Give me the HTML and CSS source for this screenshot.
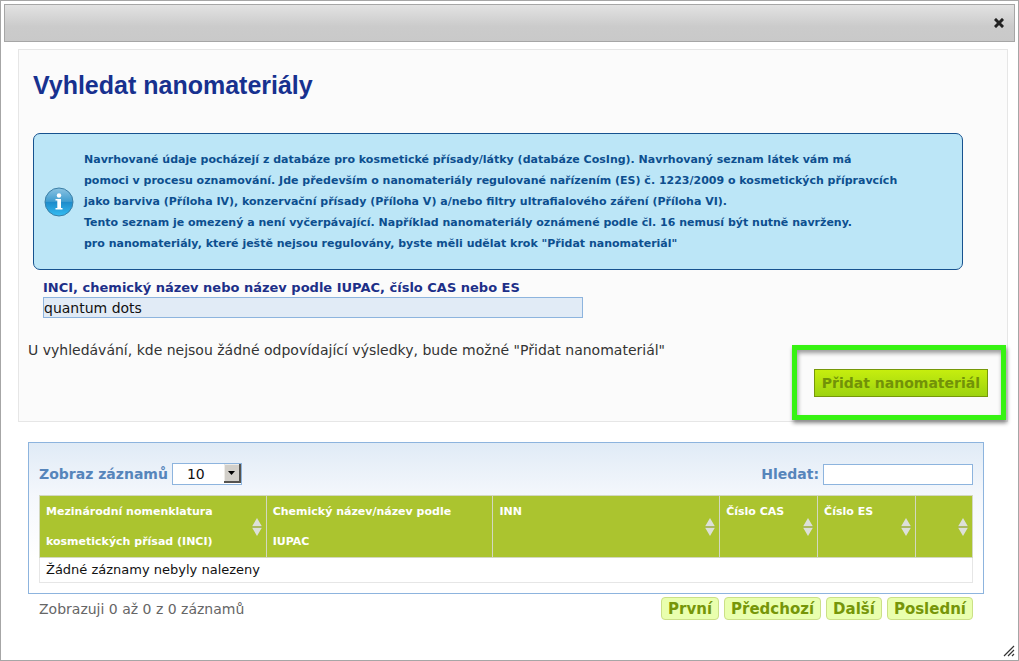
FILE: index.html
```html
<!DOCTYPE html>
<html lang="cs">
<head>
<meta charset="utf-8">
<meta name="viewport" content="width=device-width, initial-scale=1">
<title>Vyhledat nanomateriály</title>
<link rel="stylesheet" href="styles.css">
</head>
<body>
<svg width="0" height="0" class="sprite" aria-hidden="true">
  <symbol id="sort" viewBox="0 0 10 18">
    <path d="M5 0 L10 8.500 H0 Z M0 9.500 H10 L5 18 Z" fill="#dde0d8"/>
    <path d="M0 9 H10" stroke="#93a343" stroke-width="1"/>
  </symbol>
</svg>
<div class="dialog" role="dialog" aria-labelledby="dialog-title">
  <header class="titlebar">
    <button class="close" type="button" aria-label="Zavřít">
      <svg width="10" height="10" viewBox="0 0 10 10"><path d="M2 2 L8 8 M8 2 L2 8" stroke="#222" stroke-width="3" stroke-linecap="square"/></svg>
    </button>
  </header>

  <main class="content">
    <section class="panel">
      <h1 class="heading" id="dialog-title">Vyhledat nanomateriály</h1>
      <div class="info">
        <svg class="info-icon" width="30" height="30" viewBox="0 0 30 30" aria-hidden="true">
          <defs>
            <linearGradient id="ball" x1="0" y1="0" x2="0" y2="1">
              <stop offset="0" stop-color="#8cc3e2"/><stop offset=".48" stop-color="#3f9dd0"/>
              <stop offset=".5" stop-color="#1d8aca"/><stop offset="1" stop-color="#35bdf2"/>
            </linearGradient>
          </defs>
          <circle cx="15" cy="15" r="14" fill="url(#ball)" stroke="#3b7fa6"/>
          <circle cx="15" cy="8.500" r="2.200" fill="#fff"/>
          <path d="M11.500 12 H17 V21 H18.500 V22.500 H11.500 V21 H13.300 V13.500 H11.500 Z" fill="#fff"/>
        </svg>
        <p class="info-text">Navrhované údaje pocházejí z databáze pro kosmetické přísady/látky (databáze CosIng). Navrhovaný seznam látek vám má<br>pomoci v procesu oznamování. Jde především o nanomateriály regulované nařízením (ES) č. 1223/2009 o kosmetických přípravcích<br>jako barviva (Příloha IV), konzervační přísady (Příloha V) a/nebo filtry ultrafialového záření (Příloha VI).<br>Tento seznam je omezený a není vyčerpávající. Například nanomateriály oznámené podle čl. 16 nemusí být nutně navrženy.<br>pro nanomateriály, které ještě nejsou regulovány, byste měli udělat krok "Přidat nanomateriál"</p>
      </div>
      <div class="field">
        <label class="field-label" for="query">INCI, chemický název nebo název podle IUPAC, číslo CAS nebo ES</label>
        <input class="field-input" id="query" type="text" value="quantum dots">
      </div>
      <p class="hint">U vyhledávání, kde nejsou žádné odpovídající výsledky, bude možné "Přidat nanomateriál"</p>
      <div class="actions">
        <div class="action">
          <button class="add" type="button">Přidat nanomateriál</button>
          <span class="highlight"></span>
        </div>
      </div>
    </section>

    <section class="results">
      <div class="toolbar">
        <div class="tool">
          <label for="count">Zobraz záznamů</label>
          <span class="picker">
            <select class="count" id="count"><option>10</option><option>25</option><option>50</option></select>
            <svg class="arrow" width="17" height="19" viewBox="0 0 17 19" aria-hidden="true">
              <path d="M0 0 H17 V19 H0 Z" fill="#d2cfc9"/>
              <path d="M.5 18 V.5 H16" fill="none" stroke="#eeece8"/>
              <path d="M16 0 V18 H0" fill="none" stroke="#55534f" stroke-width="2"/>
              <path d="M4 7 H11 L7.500 11 Z" fill="#000"/>
            </svg>
          </span>
        </div>
        <div class="tool">
          <label for="filter">Hledat:</label>
          <input class="filter" id="filter" type="text">
        </div>
      </div>
      <table class="grid">
        <colgroup><col class="c-name"><col class="c-name"><col class="c-name"><col class="c-num"><col class="c-num"><col class="c-last"></colgroup>
        <thead>
          <tr>
            <th scope="col"><div class="head"><span>Mezinárodní nomenklatura kosmetických přísad (INCI)</span><svg class="sort" width="10" height="18"><use href="#sort"/></svg></div></th>
            <th scope="col"><div class="head"><span>Chemický název/název podle IUPAC</span></div></th>
            <th scope="col"><div class="head"><span>INN</span><svg class="sort" width="10" height="18"><use href="#sort"/></svg></div></th>
            <th scope="col"><div class="head"><span>Číslo CAS</span><svg class="sort" width="10" height="18"><use href="#sort"/></svg></div></th>
            <th scope="col"><div class="head"><span>Číslo ES</span><svg class="sort" width="10" height="18"><use href="#sort"/></svg></div></th>
            <th scope="col"><div class="head"><span></span><svg class="sort" width="10" height="18"><use href="#sort"/></svg></div></th>
          </tr>
        </thead>
        <tbody><tr><td colspan="6">Žádné záznamy nebyly nalezeny</td></tr></tbody>
      </table>
    </section>

    <footer class="footer">
      <span class="status">Zobrazuji 0 až 0 z 0 záznamů</span>
      <nav class="pager">
        <button class="page" type="button">První</button>
        <button class="page" type="button">Předchozí</button>
        <button class="page" type="button">Další</button>
        <button class="page" type="button">Poslední</button>
      </nav>
    </footer>
  </main>
  <svg class="grip" width="12" height="12" viewBox="0 0 12 12" aria-hidden="true"><path d="M1 11 L11 1 M5 11 L11 5 M9 11 L11 9" stroke="#333" stroke-width="1.200"/></svg>
</div>
</body>
</html>
```
FILE: styles.css
```css
* { box-sizing: border-box; }

body {
  margin: 0;
  background: #fff;
  color: #333;
  font: 14px/20px "DejaVu Sans", Verdana, sans-serif;
}

h1, p { margin: 0; }

button, input, select { font: inherit; margin: 0; }

.sprite { position: absolute; }

.dialog {
  position: relative;
  min-height: 100vh;
  padding: 3px;
  border: 1px solid #a6a6a6;
}

.titlebar {
  display: flex;
  align-items: center;
  justify-content: flex-end;
  height: 38px;
  padding: 0 10px;
  border: 1px solid #a6a6a6;
  background: linear-gradient(#e2e2e2, #cbcbcb 60%, #c9c9c9);
}

.close {
  display: flex;
  padding: 0;
  border: 0;
  background: none;
}

.content { padding: 7px 7px 0 14px; }

.panel {
  padding: 20px 19px 24px 9px;
  border: 1px solid #e6e6e6;
  background: #fbfbfb;
}

.heading {
  padding-left: 5px;
  color: #17318f;
  font: bold 25px/30px "Liberation Sans", Arial, sans-serif;
}

.info {
  display: flex;
  align-items: center;
  gap: 10px;
  margin: 33px 25px 0 5px;
  padding: 15px 10px;
  border: 1px solid #17528f;
  border-radius: 7px;
  background: #bce6f7;
}

.info-icon { flex: none; }

.info-text {
  color: #0d4f8f;
  font-size: 11px;
  font-weight: bold;
  line-height: 21px;
  white-space: nowrap;
}

.field {
  display: flex;
  flex-direction: column;
  margin: 8px 0 0 15px;
}

.field-label {
  color: #1d2f88;
  font-size: 13px;
  font-weight: bold;
  line-height: 19px;
}

.field-input {
  width: 540px;
  max-width: 100%;
  height: 21px;
  padding: 1px 0;
  border: 1px solid #8db4de;
  background: #e1ebf6;
  color: #111;
}

.hint { margin-top: 22px; }

.actions {
  display: flex;
  justify-content: flex-end;
  margin-top: 9px;
}

.action { position: relative; }

.add {
  display: block;
  height: 28px;
  padding: 0 7px;
  border: 1px solid #76980a;
  background: linear-gradient(#c6ee0e, #9dd310);
  color: #729208;
  font-weight: bold;
}

.highlight {
  position: absolute;
  inset: -24px -18px -23px -22px;
  border: 5px solid #37f312;
  box-shadow: 1px 3px 4px #888, inset 1px 3px 4px #999;
  pointer-events: none;
}

.results {
  margin: 20px 24px 0 10px;
  padding: 20px 10px 10px;
  border: 1px solid #8db4de;
  background: linear-gradient(#e0ebf6, #f4f7fc 52px, #fff 115px);
}

.toolbar {
  display: flex;
  justify-content: space-between;
  margin-bottom: 10px;
  color: #5685bb;
  font-weight: bold;
}

.tool {
  display: flex;
  align-items: center;
  gap: 4px;
}

.picker { position: relative; display: flex; }

.count {
  appearance: none;
  width: 70px;
  height: 22px;
  padding: 0 0 0 14px;
  border: 1px solid #8db4de;
  border-radius: 0;
  background: #fff;
  color: #111;
  font-weight: normal;
}

.arrow {
  position: absolute;
  top: 1px;
  right: 1px;
  pointer-events: none;
}

.filter {
  width: 150px;
  height: 21px;
  padding: 1px 2px;
  border: 1px solid #8db4de;
  background: #fff;
}

.grid {
  width: 100%;
  border-collapse: collapse;
  table-layout: fixed;
}

.c-name { width: 24.3%; }
.c-num { width: 10.5%; }
.c-last { width: 6.1%; }

.grid th {
  padding: 1px 4px 0 6px;
  border: 1px solid #d3d8c0;
  background: #abc42f;
  color: #fff;
  font-size: 11px;
  line-height: 30px;
  text-align: left;
  vertical-align: top;
}

.head {
  display: flex;
  justify-content: space-between;
  min-height: 60px;
}

.sort { flex: none; align-self: center; }

.grid td {
  padding: 2px 6px;
  border: 1px solid #e6e6e6;
  background: #fff;
  color: #111;
  font-size: 13px;
}

.footer {
  display: flex;
  align-items: center;
  justify-content: space-between;
  margin: 3px 35px 0 21px;
}

.status { color: #666; }

.pager { display: flex; gap: 5px; }

.page {
  height: 23px;
  padding: 0 6px;
  border: 1px solid #cbe087;
  border-radius: 4px;
  background: #e9ffae;
  color: #769609;
  font-size: 15px;
  font-weight: bold;
  line-height: 20px;
}

.grip { position: absolute; right: 3px; bottom: 3px; }
```
